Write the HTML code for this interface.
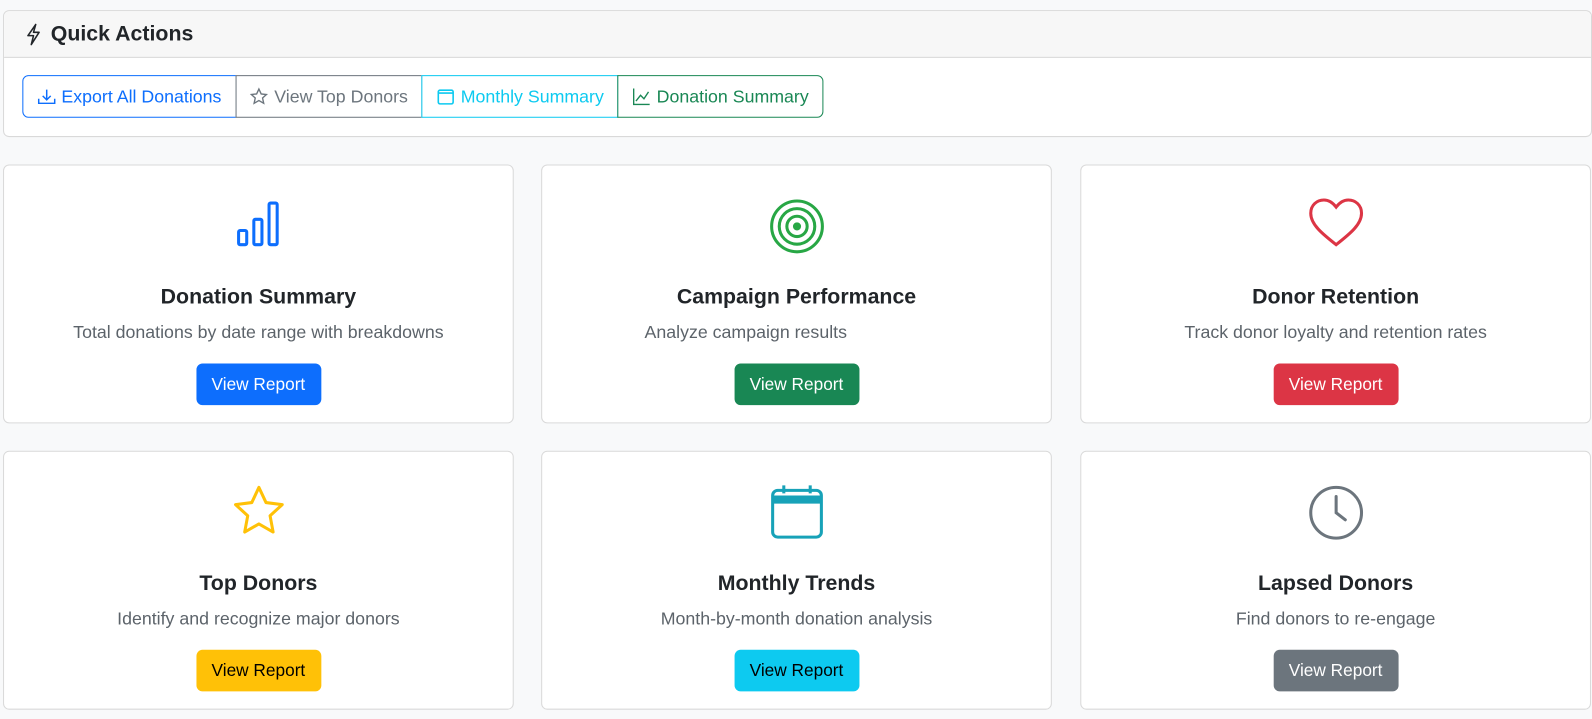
<!DOCTYPE html>
<html><head><style>
*{box-sizing:border-box;margin:0;padding:0}
body{width:1592px;height:719px;background:#f8f9fa;font-family:"Liberation Sans",sans-serif;color:#212529;overflow:hidden}
#w{position:relative;width:1568px;height:708px;transform:scale(1.0153);transform-origin:0 0}
.qa{position:absolute;left:3px;top:10px;width:1565px;height:125px;background:#fff;border:1px solid #d9d9d9;border-radius:6px;overflow:hidden}
.qh{height:46px;background:#f7f7f7;border-bottom:1px solid #d9d9d9;display:flex;align-items:center;padding-left:20px;font-size:21px;font-weight:bold}
.bg{position:absolute;left:18px;top:63px;display:flex;height:42px}
.b{display:flex;align-items:center;gap:6px;padding:0 13.5px;font-size:17.5px;border:1px solid;height:42px;margin-left:-1px;background:#fff}
.b:first-child{border-radius:6px 0 0 6px;margin-left:0}
.b:last-child{border-radius:0 6px 6px 0}
.card{position:absolute;width:503px;height:255px;background:#fff;border:1px solid #d9d9d9;border-radius:6px;text-align:center}
.card svg.ic{position:absolute;left:50%;top:32px;transform:translateX(-50%)}
.card h3{position:absolute;top:118px;width:100%;font-size:21px;font-weight:bold}
.card p{position:absolute;top:154px;width:100%;font-size:17.5px;color:#5c636a}
.card .vb{position:absolute;left:50%;top:195px;transform:translateX(-50%);width:123px;height:41px;border-radius:6px;color:#fff;font-size:17px;line-height:41px}
</style></head><body><div id="w">
<div class="qa">
<div class="qh"><svg width="18" height="22" viewBox="0 0 16 20" style="margin-right:8px"><path d="M10 1 L3 11 H8 L6 19 L13 8 H8 Z" fill="none" stroke="#212529" stroke-width="1.4" stroke-linejoin="round"/></svg>Quick Actions</div>
<div class="bg">
<div class="b" style="color:#0d6efd;border-color:#0d6efd"><svg width="18" height="18" viewBox="0 0 16 16" fill="none" stroke="#0d6efd" stroke-width="1.3"><path d="M1 10v4h14v-4M8 2v9M4.5 7.5 8 11l3.5-3.5"/></svg>Export All Donations</div>
<div class="b" style="color:#6c757d;border-color:#6c757d"><svg width="18" height="18" viewBox="0 0 16 16" fill="none" stroke="#6c757d" stroke-width="1.2"><path d="M8 1.5l2 4.3 4.6.5-3.4 3.1 1 4.6L8 11.6 3.8 14l1-4.6L1.4 6.3l4.6-.5z"/></svg>View Top Donors</div>
<div class="b" style="color:#0dcaf0;border-color:#0dcaf0"><svg width="18" height="18" viewBox="0 0 16 16" fill="none" stroke="#0dcaf0" stroke-width="1.4"><rect x="1.5" y="2.5" width="13" height="12" rx="1.5"/><path d="M1.5 5h13"/></svg>Monthly Summary</div>
<div class="b" style="color:#198754;border-color:#198754"><svg width="18" height="18" viewBox="0 0 16 16" fill="none" stroke="#198754" stroke-width="1.2"><path d="M1 1v14h14M3 12l4-5 3 3 4-6"/></svg>Donation Summary</div>
</div></div>

<div class="card" style="left:3px;top:162px"><svg class="ic" width="50" height="50" viewBox="0 0 50 50" fill="none" stroke="#0d6efd" stroke-width="3"><rect x="5" y="32" width="8" height="14" rx="1.5"/><rect x="20" y="21" width="8" height="25" rx="1.5"/><rect x="35" y="5" width="8" height="41" rx="1.5"/></svg><h3>Donation Summary</h3><p>Total donations by date range with breakdowns</p><div class="vb" style="background:#0d6efd">View Report</div></div>
<div class="card" style="left:533px;top:162px"><svg class="ic" width="56" height="56" viewBox="0 0 56 56" fill="none" stroke="#28a745" stroke-width="3"><circle cx="28" cy="28" r="25"/><circle cx="28" cy="28" r="17.5"/><circle cx="28" cy="28" r="10"/><circle cx="28" cy="28" r="4" fill="#28a745" stroke="none"/></svg><h3>Campaign Performance</h3><p style="padding-right:100px">Analyze campaign results</p><div class="vb" style="background:#198754">View Report</div></div>
<div class="card" style="left:1064px;top:162px"><svg class="ic" width="56" height="50" viewBox="0 0 56 50" fill="none" stroke="#dc3545" stroke-width="3"><path d="M28 46 C14 35 3 26 3 15 C3 7 9 2 16 2 C21 2 25 5 28 9 C31 5 35 2 40 2 C47 2 53 7 53 15 C53 26 42 35 28 46Z"/></svg><h3>Donor Retention</h3><p>Track donor loyalty and retention rates</p><div class="vb" style="background:#dc3545">View Report</div></div>

<div class="card" style="left:3px;top:444px"><svg class="ic" width="56" height="56" viewBox="0 0 56 56" fill="none" stroke="#ffc107" stroke-width="3" stroke-linejoin="round"><path d="M28 3l7 15 16 2-12 11 3 16-14-8-14 8 3-16L5 20l16-2z"/></svg><h3>Top Donors</h3><p>Identify and recognize major donors</p><div class="vb" style="background:#ffc107;color:#000">View Report</div></div>
<div class="card" style="left:533px;top:444px"><svg class="ic" width="56" height="56" viewBox="0 0 56 56" fill="none" stroke="#17a2b8" stroke-width="3"><rect x="4" y="6" width="48" height="46" rx="5"/><path d="M4 15h48" stroke-width="8"/><path d="M15 1v8M41 1v8"/></svg><h3>Monthly Trends</h3><p>Month-by-month donation analysis</p><div class="vb" style="background:#0dcaf0;color:#000">View Report</div></div>
<div class="card" style="left:1064px;top:444px"><svg class="ic" width="56" height="56" viewBox="0 0 56 56" fill="none" stroke="#6c757d" stroke-width="3"><circle cx="28" cy="28" r="25"/><path d="M28 12v16l9 7" stroke-linecap="round"/></svg><h3>Lapsed Donors</h3><p>Find donors to re-engage</p><div class="vb" style="background:#6c757d">View Report</div></div>
</div></body></html>
